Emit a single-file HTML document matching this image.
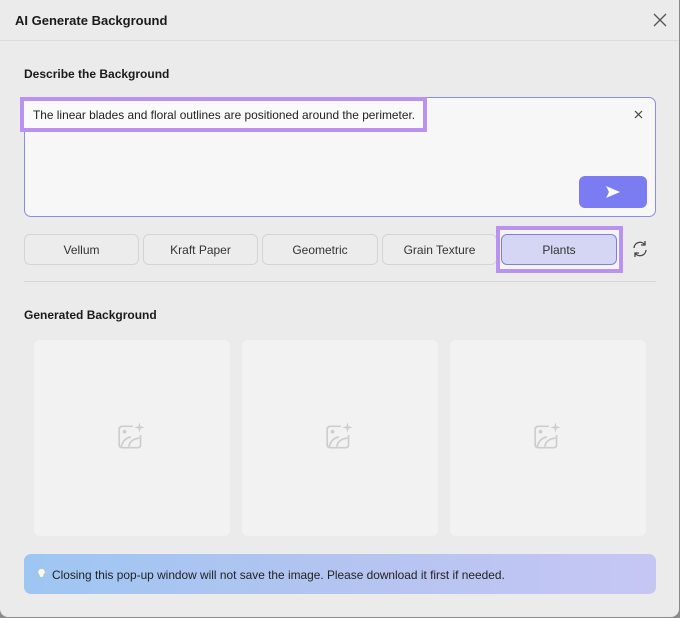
<!DOCTYPE html>
<html><head><style>
*{box-sizing:border-box;margin:0;padding:0}
body{width:680px;height:618px;background:#8a8a8a;font-family:"Liberation Sans",sans-serif;position:relative;overflow:hidden}
.win{position:absolute;left:0;top:0;width:679px;height:617px;background:#ebebeb;border-radius:0 0 8px 8px}
.t{position:absolute;color:#1a1a1a}
.btn{position:absolute;top:234px;height:31px;border:1px solid #d4d4d4;border-radius:6px;background:#ececec;font-size:12px;color:#333;display:flex;align-items:center;justify-content:center}
.card{position:absolute;top:340px;width:196px;height:196px;background:#f2f2f2;border-radius:6px}
.card svg{position:absolute;left:82px;top:81px}
</style></head><body>
<div class="win">
<div class="t" style="left:15px;top:13px;font-size:13px;font-weight:bold">AI Generate Background</div>
<svg style="position:absolute;left:653px;top:13px" width="14" height="14"><path d="M1 1L13 13M13 1L1 13" stroke="#555" stroke-width="1.3"/></svg>
<div style="position:absolute;left:0;top:40px;width:679px;height:1px;background:#dcdcdc"></div>
<div class="t" style="left:24px;top:67px;font-size:12px;font-weight:bold">Describe the Background</div>
<div style="position:absolute;left:24px;top:97px;width:632px;height:120px;border:1px solid #8b8bea;border-radius:7px;background:#f7f7f7"></div>
<div style="position:absolute;left:20px;top:97px;width:407px;height:35px;border:4px solid #b992f2;background:#fafafa"></div>
<div class="t" style="left:33px;top:108px;font-size:11.9px;color:#222">The linear blades and floral outlines are positioned around the perimeter.</div>
<svg style="position:absolute;left:634px;top:110px" width="9" height="9"><path d="M1 1L8 8M8 1L1 8" stroke="#444" stroke-width="1.2"/></svg>
<div style="position:absolute;left:579px;top:176px;width:68px;height:32px;background:#7b7bf2;border-radius:6px"></div>
<svg style="position:absolute;left:605px;top:185px" width="16" height="14"><path d="M1 1L15 7L1 13L4 7Z" fill="#fff"/></svg>
<div class="btn" style="left:24px;width:115px">Vellum</div>
<div class="btn" style="left:143px;width:115px">Kraft Paper</div>
<div class="btn" style="left:262px;width:116px">Geometric</div>
<div class="btn" style="left:382px;width:115px">Grain Texture</div>
<div style="position:absolute;left:496px;top:226px;width:127px;height:47px;border:4px solid #b992f2;background:#f4f4f4"></div>
<div class="btn" style="left:501px;width:116px;background:#d4d6f4;border-color:#7f7fd8">Plants</div>
<svg style="position:absolute;left:631px;top:240px" width="18" height="18" fill="none" stroke="#444" stroke-width="1.3"><path d="M3 8A6 6 0 0 1 14 5M14 1V5H10M15 10A6 6 0 0 1 4 13M4 17V13H8"/></svg>
<div style="position:absolute;left:24px;top:281px;width:632px;height:1px;background:#d6d6d6"></div>
<div class="t" style="left:24px;top:308px;font-size:12px;font-weight:bold">Generated Background</div>
<div class="card" style="left:34px"><svg width="32" height="32" viewBox="0 0 30 30" fill="none" stroke="#cdcdcd" stroke-width="1.6"><path d="M16 5H6Q3 5 3 8V22Q3 25 6 25H20Q23 25 23 22V13"/><circle cx="8" cy="10" r="1" fill="#cdcdcd"/><path d="M5 24Q7 16 14 15M12 24Q13 17 22 16"/><path d="M22 1L23 5L27 6L23 7L22 11L21 7L17 6L21 5Z" fill="#cdcdcd" stroke="none"/></svg></div>
<div class="card" style="left:242px"><svg width="32" height="32" viewBox="0 0 30 30" fill="none" stroke="#cdcdcd" stroke-width="1.6"><path d="M16 5H6Q3 5 3 8V22Q3 25 6 25H20Q23 25 23 22V13"/><circle cx="8" cy="10" r="1" fill="#cdcdcd"/><path d="M5 24Q7 16 14 15M12 24Q13 17 22 16"/><path d="M22 1L23 5L27 6L23 7L22 11L21 7L17 6L21 5Z" fill="#cdcdcd" stroke="none"/></svg></div>
<div class="card" style="left:450px"><svg width="32" height="32" viewBox="0 0 30 30" fill="none" stroke="#cdcdcd" stroke-width="1.6"><path d="M16 5H6Q3 5 3 8V22Q3 25 6 25H20Q23 25 23 22V13"/><circle cx="8" cy="10" r="1" fill="#cdcdcd"/><path d="M5 24Q7 16 14 15M12 24Q13 17 22 16"/><path d="M22 1L23 5L27 6L23 7L22 11L21 7L17 6L21 5Z" fill="#cdcdcd" stroke="none"/></svg></div>
<div style="position:absolute;left:24px;top:554px;width:632px;height:40px;border-radius:7px;background:linear-gradient(90deg,#9ec6f2,#b4c4f0 50%,#c6c6f4)"></div>
<svg style="position:absolute;left:38px;top:568px" width="7" height="11"><path d="M3.5 1A3 3 0 0 1 6 6L4.5 9H2.5L1 6A3 3 0 0 1 3.5 1Z" fill="#fff8dc"/></svg>
<div class="t" style="left:52px;top:568px;font-size:11.9px;color:#222">Closing this pop-up window will not save the image. Please download it first if needed.</div>
</div>
</body></html>
